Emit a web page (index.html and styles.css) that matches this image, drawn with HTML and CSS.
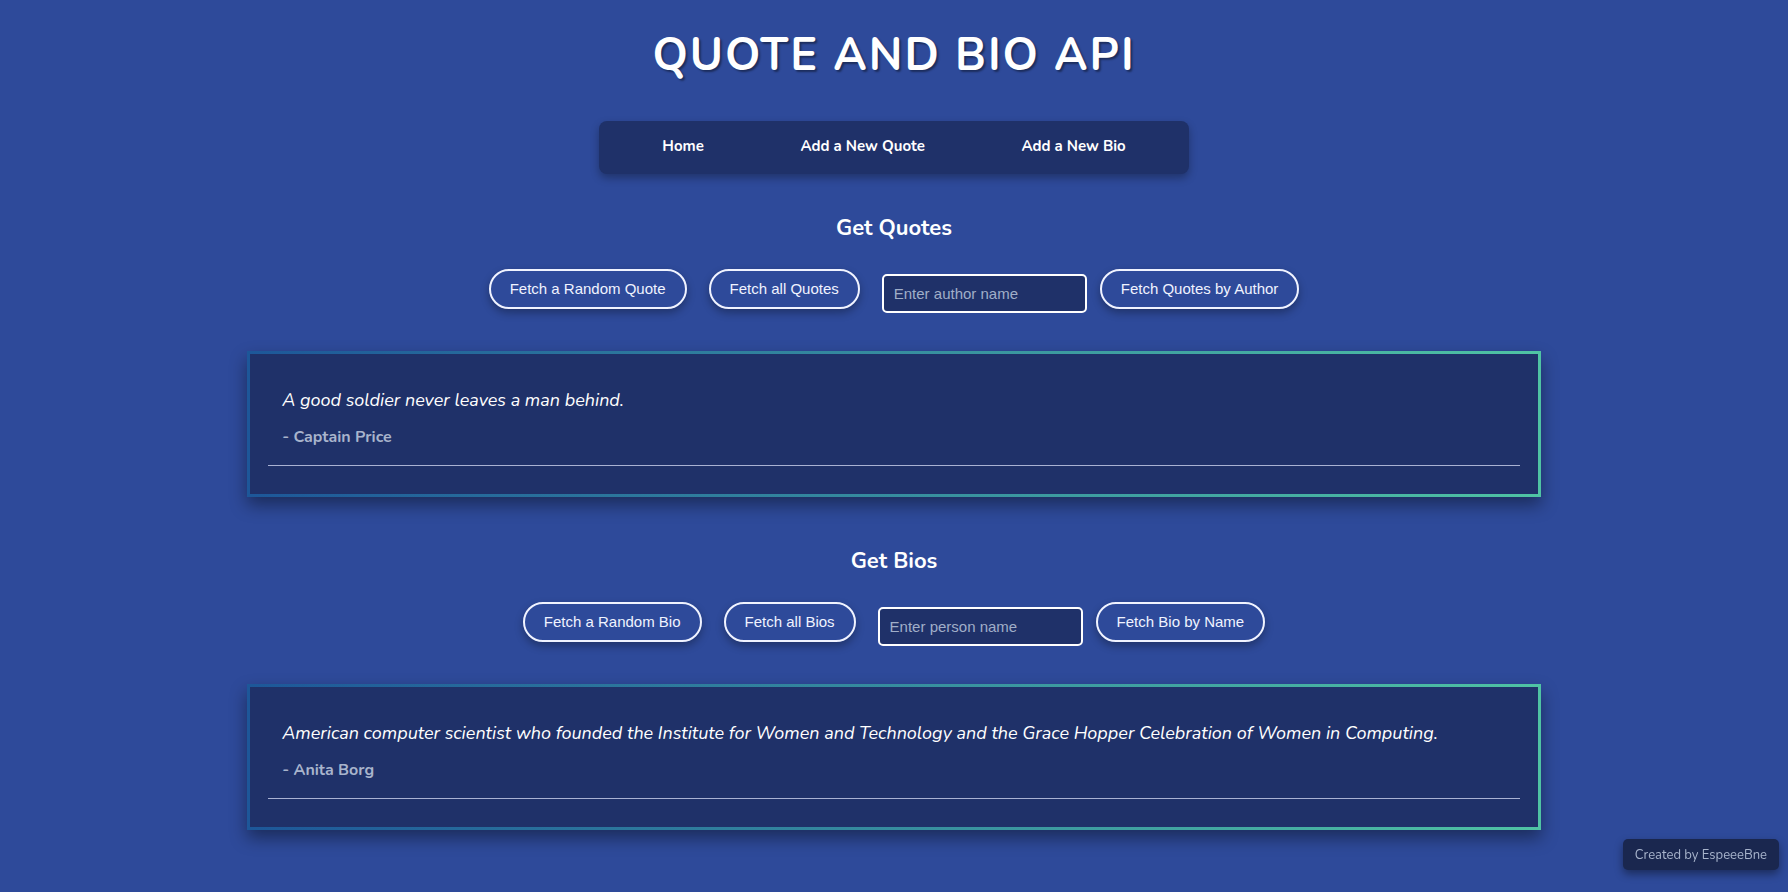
FILE: index.html
```
<!DOCTYPE html>
<html lang="en">
<head>
<meta charset="utf-8">
<meta name="viewport" content="width=device-width, initial-scale=1">
<title>Quote and Bio API</title>
<link rel="stylesheet" href="styles.css">
</head>
<body>
<header class="header">
  <h1 class="title">QUOTE AND BIO API</h1>
  <nav class="nav">
    <a class="nav-link" href="#">Home</a>
    <a class="nav-link" href="#">Add a New Quote</a>
    <a class="nav-link" href="#">Add a New Bio</a>
  </nav>
</header>
<main class="main">
  <section class="section">
    <h2 class="heading">Get Quotes</h2>
    <div class="controls">
      <button class="button" type="button">Fetch a Random Quote</button>
      <button class="button" type="button">Fetch all Quotes</button>
      <form class="search">
        <input class="field" type="text" placeholder="Enter author name" aria-label="Author name">
        <button class="button" type="button">Fetch Quotes by Author</button>
      </form>
    </div>
    <div class="card">
      <article class="entry">
        <p class="text">A good soldier never leaves a man behind.</p>
        <p class="author">- Captain Price</p>
      </article>
    </div>
  </section>
  <section class="section">
    <h2 class="heading">Get Bios</h2>
    <div class="controls">
      <button class="button" type="button">Fetch a Random Bio</button>
      <button class="button" type="button">Fetch all Bios</button>
      <form class="search">
        <input class="field" type="text" placeholder="Enter person name" aria-label="Person name">
        <button class="button" type="button">Fetch Bio by Name</button>
      </form>
    </div>
    <div class="card">
      <article class="entry">
        <p class="text">American computer scientist who founded the Institute for Women and Technology and the Grace Hopper Celebration of Women in Computing.</p>
        <p class="author">- Anita Borg</p>
      </article>
    </div>
  </section>
</main>
<footer class="credit">Created by EspeeeBne</footer>
</body>
</html>
```

FILE: styles.css
```
* {
  box-sizing: border-box;
}

body {
  min-height: 100vh;
  margin: 0;
  background: #2e4a9a;
  color: #fff;
  font-family: Nunito, Lato, sans-serif;
  font-size: 15px;
  line-height: 24px;
}

.header {
  padding-top: 26px;
}

.title {
  margin: 0 0 35px;
  font-size: 45px;
  line-height: 60px;
  font-weight: 700;
  letter-spacing: 2px;
  text-align: center;
  text-shadow: 2px 2px 2px rgba(0, 0, 0, 0.4);
}

.nav {
  display: flex;
  justify-content: space-around;
  width: 33%;
  min-width: 420px;
  margin: 0 auto;
  padding: 13px 15px 16px;
  border-radius: 8px;
  background: #1f3169;
  box-shadow: 0 4px 8px rgba(0, 0, 0, 0.3);
}

.nav-link {
  color: #fff;
  font-weight: 700;
  text-decoration: none;
}

.main {
  width: calc(70% + 42px);
  margin: 0 auto;
}

.section {
  padding: 38px 0 10px;
}

.heading {
  margin: 0 0 24px;
  font-size: 22px;
  line-height: 33px;
  font-weight: 700;
  text-align: center;
}

.controls {
  display: flex;
  flex-wrap: wrap;
  justify-content: center;
  gap: 22px;
}

.search {
  display: flex;
  align-items: flex-start;
  gap: 13px;
}

.button {
  height: 40px;
  padding: 0 19px 2px;
  border: 2px solid #f0f3ff;
  border-radius: 20px;
  background: transparent;
  color: #f0f3ff;
  font: 15px "Liberation Sans", Arial, sans-serif;
  box-shadow: 0 4px 8px rgba(0, 0, 0, 0.3);
}

.field {
  width: 205px;
  height: 39px;
  margin-top: 5px;
  padding: 0 10px;
  border: 2px solid #fff;
  border-radius: 5px;
  background: #1f3169;
  color: #fff;
  font: 15px "Liberation Sans", Arial, sans-serif;
}

.field::placeholder {
  color: #a0aec8;
  opacity: 1;
}

.card {
  margin-top: 38px;
  padding: 31px 18px 28px;
  border: 3px solid;
  border-image: linear-gradient(90deg, #1d5799, #4fc3a4) 1;
  background: #1f3169;
  box-shadow: 0 8px 16px rgba(0, 0, 0, 0.4);
}

.entry {
  padding: 0 14px 14px;
  border-bottom: 1px solid #a9b2d3;
}

.text {
  margin: 0 0 8px;
  font-size: 18px;
  line-height: 30px;
  font-style: italic;
}

.author {
  margin: 0;
  color: #a8b4cc;
  font-size: 16px;
  font-weight: 700;
  line-height: 28px;
}

.credit {
  position: fixed;
  right: 9px;
  bottom: 22px;
  padding: 4px 12px 3px;
  border-radius: 5px;
  background: #1a274f;
  color: #a8b4cc;
  font-size: 13px;
  box-shadow: 0 4px 8px rgba(0, 0, 0, 0.4);
}
```
